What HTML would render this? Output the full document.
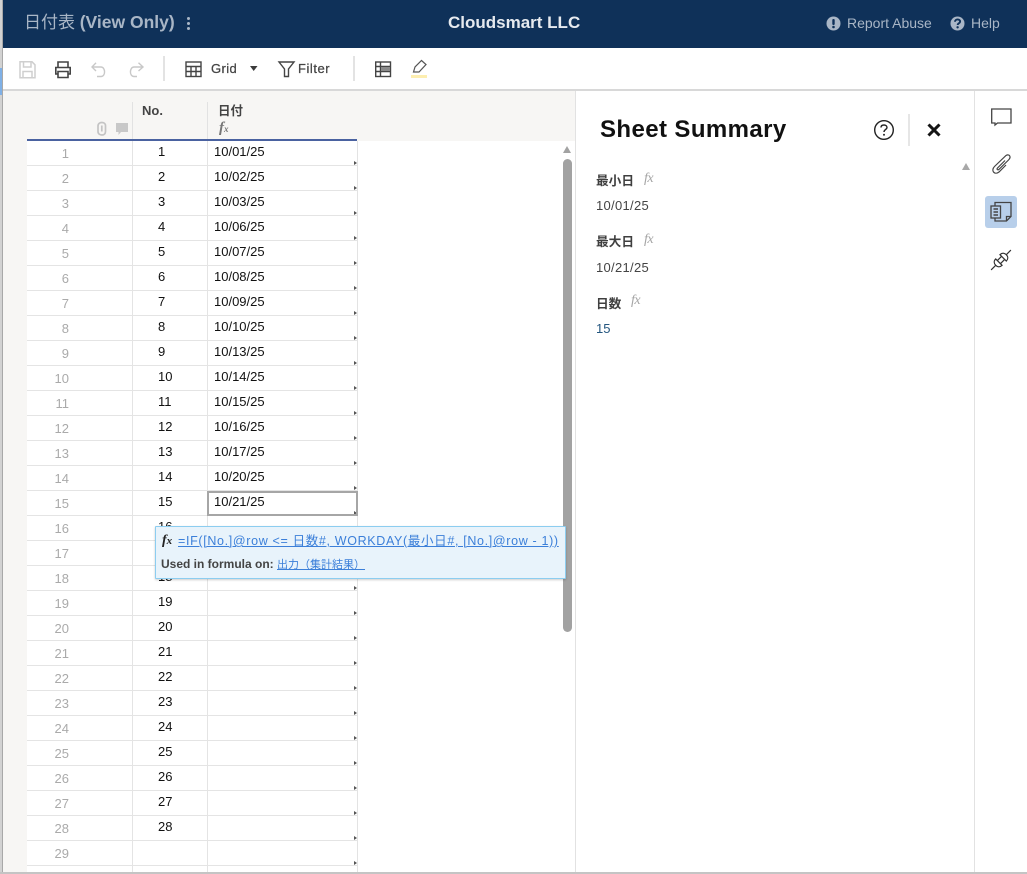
<!DOCTYPE html>
<html><head><meta charset="utf-8">
<style>
*{box-sizing:border-box}
html,body{margin:0;padding:0;width:1027px;height:874px;overflow:hidden;background:#fff;font-family:"Liberation Sans","Noto Sans CJK JP",sans-serif}
#w{position:relative;width:1027px;height:874px;overflow:hidden;background:#fff}
.a{position:absolute}
.t{position:absolute;white-space:nowrap;line-height:16px}
.r{position:absolute;left:27px;width:331px;height:25px;border-bottom:1px solid #e4e4e4;border-right:1px solid #e3e3e3}
.r i{position:absolute;font-style:normal;white-space:nowrap;line-height:16px;font-size:13px}
.r .n{right:288px;top:5px;color:#aaa;width:40px;text-align:right}
.r .v{left:131px;top:3px;color:#111}
.r .d{left:187px;top:3px;color:#111}
.r:before{content:"";position:absolute;left:105px;top:0;width:1px;height:25px;background:#e4e4e4}
.r:after{content:"";position:absolute;left:180px;top:0;width:1px;height:25px;background:#e4e4e4}
.r b{position:absolute;right:0;top:20px;width:0;height:0;border-left:3px solid #555;border-top:2px solid transparent;border-bottom:2px solid transparent}
.fx{font-size:14px;font-style:italic;font-family:'Liberation Serif',serif;color:#a5a5a5;letter-spacing:-.5px}
</style></head><body><div id="w">
<div class="a" style="left:0;top:0;width:3px;height:874px;background:#d2d2d2;border-right:1px solid #a8a8a8"></div>
<div class="a" style="left:0;top:68px;width:2px;height:27px;background:#7fb0e6"></div>
<div class="a" style="left:3px;top:0;width:1024px;height:48px;background:#0f3159"></div>
<div class="t" style="left:24px;top:12px;font-size:17px;line-height:20px;color:#a9b6c6">日付表 <span style="font-weight:bold;font-size:17.500px">(View Only)</span></div>
<div class="a" style="left:187px;top:17px;width:3px;height:3px;background:#a9b6c6;border-radius:50%;box-shadow:0 5px 0 #a9b6c6,0 10px 0 #a9b6c6"></div>
<div class="t" style="left:448px;top:13px;font-size:17px;line-height:20px;color:#e6eaef;font-weight:bold">Cloudsmart LLC</div>
<svg class="a" style="left:826px;top:16px" width="15" height="15" viewBox="0 0 15 15"><circle cx="7.5" cy="7.5" r="7" fill="#a9b6c6"/><rect x="6.3" y="3" width="2.4" height="6" rx="1" fill="#0f3159"/><circle cx="7.5" cy="11" r="1.3" fill="#0f3159"/></svg>
<div class="t" style="left:847px;top:15px;font-size:14px;color:#a9b6c6">Report Abuse</div>
<svg class="a" style="left:950px;top:16px" width="15" height="15" viewBox="0 0 15 15"><circle cx="7.5" cy="7.5" r="7" fill="#a9b6c6"/><path d="M5 5.8C5 4.3 6.2 3.4 7.6 3.4 9 3.4 10.100 4.300 10.100 5.600 10.100 7.400 7.600 7.300 7.600 9" fill="none" stroke="#0f3159" stroke-width="1.900"/><circle cx="7.600" cy="11.300" r="1.200" fill="#0f3159"/></svg>
<div class="t" style="left:971px;top:15px;font-size:14px;color:#a9b6c6">Help</div>

<div class="a" style="left:3px;top:89px;width:1024px;height:2px;background:#d8d8d8"></div>
<svg class="a" style="left:0;top:48px" width="440" height="41" viewBox="0 0 440 41" fill="none">
<g stroke="#cfcfcf" stroke-width="1.500"><path d="M20 13.800H32L35 16.800V29.800H20Z"/><path d="M23.500 14V19H31V14M23 29.800V23.500H32V29.800"/></g>
<g stroke="#444" stroke-width="1.600"><path d="M58 19V14H68V19"/><path d="M58 26H55.800V19.500H70.200V26H68"/><path d="M58 23.500H68V29.500H58Z"/></g>
<g stroke="#c8c8c8" stroke-width="1.400"><path d="M92 19H101C105.500 19 106 28.500 101 28.500H97"/><path d="M96 14.800L92 19 96 23"/><path d="M143 19H134C129.500 19 129 28.500 134 28.500H137"/><path d="M138.500 14.800L143 19 138.500 23"/></g>
<rect x="163" y="8" width="2" height="25" fill="#e3e3e3"/>
<rect x="353" y="8" width="2" height="25" fill="#e3e3e3"/>
<g stroke="#444" stroke-width="1.400"><rect x="186" y="14" width="15" height="14.500"/><path d="M186 18.500H201M186 23.500H201M191 18.500V28.500M196 18.500V28.500"/></g>
<path d="M250 18H257.500L253.700 23Z" fill="#3c3c3c"/>
<path d="M279 14H294L288.500 21V28.500L284.500 28.500V21Z" stroke="#444" stroke-width="1.400"/>
<g stroke="#444" stroke-width="1.400"><rect x="375.700" y="14" width="14.800" height="14.500"/><path d="M375.700 18.500H390.500M375.700 23.500H390.500M380.500 14V28.500"/></g>
<rect x="381" y="19" width="9" height="4" fill="#8a8a8a"/>
<path d="M413.500 24L415 19 421.500 12.500 426 16.500 419 24Z" stroke="#555" stroke-width="1.200"/>
<rect x="411" y="27" width="16" height="3" fill="#fdeeb0"/>
</svg>
<div class="t" style="left:211px;top:61px;font-size:13px;color:#444;letter-spacing:.4px;-webkit-text-stroke:.25px #444">Grid</div>
<div class="t" style="left:298px;top:61px;font-size:13px;color:#444;letter-spacing:.55px;-webkit-text-stroke:.25px #444">Filter</div>

<div class="a" style="left:3px;top:91px;width:572px;height:50px;background:#f7f6f4"></div>
<div class="a" style="left:3px;top:91px;width:24px;height:781px;background:#f7f6f4"></div>
<div class="a" style="left:132px;top:102px;width:1px;height:37px;background:#e2e2e2"></div>
<div class="a" style="left:207px;top:102px;width:1px;height:37px;background:#e2e2e2"></div>
<div class="t" style="left:142px;top:103px;font-size:13px;font-weight:bold;color:#444">No.</div>
<div class="t" style="left:218px;top:103px;font-size:12.500px;font-weight:bold;color:#444">日付</div>
<div class="t" style="left:219px;top:120px;font-size:15px;font-weight:bold;font-style:italic;font-family:'Liberation Serif',serif;color:#777">f<span style="font-size:9px">x</span></div>
<svg class="a" style="left:95px;top:121px" width="34" height="16" viewBox="0 0 34 16" fill="none"><path d="M10.500 4.500V10.500C10.500 12.800 9 14 7 14 4.800 14 3 12.800 3 10.500V5C3 2.700 4.800 1.500 6.800 1.500 8.800 1.500 10.500 2.700 10.500 4.500" stroke="#c4c4c4" stroke-width="1.700"/><path d="M6.800 4.500V10.500" stroke="#c4c4c4" stroke-width="1.700"/><path d="M21 2H33V11H26L23.500 14V11H21Z" fill="#c8c8c8"/></svg>

<div class="a" style="left:27px;top:139px;width:330px;height:2px;background:#4a62a0"></div>

<div class="r" style="top:141px"><i class="n">1</i><i class="v">1</i><i class="d">10/01/25</i><b></b></div>
<div class="r" style="top:166px"><i class="n">2</i><i class="v">2</i><i class="d">10/02/25</i><b></b></div>
<div class="r" style="top:191px"><i class="n">3</i><i class="v">3</i><i class="d">10/03/25</i><b></b></div>
<div class="r" style="top:216px"><i class="n">4</i><i class="v">4</i><i class="d">10/06/25</i><b></b></div>
<div class="r" style="top:241px"><i class="n">5</i><i class="v">5</i><i class="d">10/07/25</i><b></b></div>
<div class="r" style="top:266px"><i class="n">6</i><i class="v">6</i><i class="d">10/08/25</i><b></b></div>
<div class="r" style="top:291px"><i class="n">7</i><i class="v">7</i><i class="d">10/09/25</i><b></b></div>
<div class="r" style="top:316px"><i class="n">8</i><i class="v">8</i><i class="d">10/10/25</i><b></b></div>
<div class="r" style="top:341px"><i class="n">9</i><i class="v">9</i><i class="d">10/13/25</i><b></b></div>
<div class="r" style="top:366px"><i class="n">10</i><i class="v">10</i><i class="d">10/14/25</i><b></b></div>
<div class="r" style="top:391px"><i class="n">11</i><i class="v">11</i><i class="d">10/15/25</i><b></b></div>
<div class="r" style="top:416px"><i class="n">12</i><i class="v">12</i><i class="d">10/16/25</i><b></b></div>
<div class="r" style="top:441px"><i class="n">13</i><i class="v">13</i><i class="d">10/17/25</i><b></b></div>
<div class="r" style="top:466px"><i class="n">14</i><i class="v">14</i><i class="d">10/20/25</i><b></b></div>
<div class="r" style="top:491px"><i class="n">15</i><i class="v">15</i><i class="d">10/21/25</i><b></b></div>
<div class="r" style="top:516px"><i class="n">16</i><i class="v">16</i><b></b></div>
<div class="r" style="top:541px"><i class="n">17</i><i class="v">17</i><b></b></div>
<div class="r" style="top:566px"><i class="n">18</i><i class="v">18</i><b></b></div>
<div class="r" style="top:591px"><i class="n">19</i><i class="v">19</i><b></b></div>
<div class="r" style="top:616px"><i class="n">20</i><i class="v">20</i><b></b></div>
<div class="r" style="top:641px"><i class="n">21</i><i class="v">21</i><b></b></div>
<div class="r" style="top:666px"><i class="n">22</i><i class="v">22</i><b></b></div>
<div class="r" style="top:691px"><i class="n">23</i><i class="v">23</i><b></b></div>
<div class="r" style="top:716px"><i class="n">24</i><i class="v">24</i><b></b></div>
<div class="r" style="top:741px"><i class="n">25</i><i class="v">25</i><b></b></div>
<div class="r" style="top:766px"><i class="n">26</i><i class="v">26</i><b></b></div>
<div class="r" style="top:791px"><i class="n">27</i><i class="v">27</i><b></b></div>
<div class="r" style="top:816px"><i class="n">28</i><i class="v">28</i><b></b></div>
<div class="r" style="top:841px"><i class="n">29</i><b></b></div>
<div class="r" style="top:866px;height:6px;border-bottom:0;overflow:hidden"></div>

<div class="a" style="left:207px;top:491px;width:151px;height:25px;border:2px solid #a6a6a6"></div>

<div class="a" style="left:563px;top:159px;width:9px;height:473px;background:#a2a2a2;border-radius:5px"></div>
<div class="a" style="left:563px;top:146px;width:0;height:0;border-left:4.500px solid transparent;border-right:4.500px solid transparent;border-bottom:7px solid #a2a2a2"></div>

<div class="a" style="left:155px;top:526px;width:411px;height:53px;background:#e8f3fb;border:1px solid #8ccdf0;box-shadow:0 1px 2px rgba(0,0,0,.2);border-radius:1px"></div>
<div class="t" style="left:162px;top:533px;font-size:14px;font-weight:bold;font-style:italic;font-family:'Liberation Serif',serif;color:#222">f<span style="font-size:11px">x</span></div>
<div class="t" style="left:178px;top:533px;font-size:12.500px;color:#3b7fd9;text-decoration:underline;letter-spacing:.66px">=IF([No.]@row &lt;= 日数#, WORKDAY(最小日#, [No.]@row - 1))</div>
<div class="t" style="left:161px;top:556px;font-size:12px;color:#444"><span style="font-weight:bold">Used in formula on:</span> <span style="color:#3b7fd9;text-decoration:underline;font-size:11px">出力（集計結果）</span></div>

<div class="a" style="left:575px;top:91px;width:1px;height:781px;background:#e2e2e2"></div>

<div class="t" style="left:600px;top:115px;font-size:24px;line-height:30px;font-weight:bold;color:#111;letter-spacing:.4px">Sheet Summary</div>
<svg class="a" style="left:873px;top:119px" width="22" height="22" viewBox="0 0 22 22" fill="none"><circle cx="11" cy="11" r="9.300" stroke="#222" stroke-width="1.400"/><path d="M8 8.500C8 6.700 9.400 6 11 6 12.600 6 14 6.900 14 8.500 14 10.500 11 10.500 11 13" stroke="#222" stroke-width="1.400"/><circle cx="11" cy="15.800" r="1" fill="#222"/></svg>
<div class="a" style="left:908px;top:114px;width:2px;height:32px;background:#e6e6e6"></div>
<svg class="a" style="left:927px;top:123px" width="14" height="14" viewBox="0 0 14 14"><path d="M1.500 1.500L12.500 12.500M12.500 1.500L1.500 12.500" stroke="#151515" stroke-width="3"/></svg>
<div class="a" style="left:962px;top:163px;width:0;height:0;border-left:4.500px solid transparent;border-right:4.500px solid transparent;border-bottom:7px solid #a8a8a8"></div>

<div class="t" style="left:596px;top:173px;font-size:12.700px;font-weight:bold;color:#3f3f3f">最小日</div>
<div class="t fx" style="left:644px;top:171px">fx</div>
<div class="t" style="left:596px;top:198px;font-size:13px;letter-spacing:.3px;color:#444">10/01/25</div>
<div class="t" style="left:596px;top:234px;font-size:12.700px;font-weight:bold;color:#3f3f3f">最大日</div>
<div class="t fx" style="left:644px;top:232px">fx</div>
<div class="t" style="left:596px;top:260px;font-size:13px;letter-spacing:.3px;color:#444">10/21/25</div>
<div class="t" style="left:596px;top:296px;font-size:12.700px;font-weight:bold;color:#3f3f3f">日数</div>
<div class="t fx" style="left:631px;top:293px">fx</div>
<div class="t" style="left:596px;top:321px;font-size:13px;color:#24567f">15</div>

<div class="a" style="left:974px;top:91px;width:1px;height:781px;background:#e2e2e2"></div>
<div class="a" style="left:985px;top:196px;width:32px;height:32px;background:#b8cfea;border-radius:3px"></div>
<svg class="a" style="left:985px;top:100px" width="32" height="175" viewBox="0 0 32 175" fill="none">
<path d="M6.700 9H26V23H12.500L10 25V23H6.700Z" stroke="#444" stroke-width="1.300"/>
<path d="M20 60.500L12.500 68C11.500 69 12.500 70.500 13.800 69.500L23.500 60C26.500 57 24.500 53.500 21 55.500L9.500 66.500C5.500 70.500 9.500 75.500 14 72L21 65" stroke="#444" stroke-width="1.200"/>
<g stroke="#444" stroke-width="1.300"><path d="M10 102.500H26V116.500L21.500 121H10Z"/><path d="M21.500 121V116.500H26"/><rect x="6" y="106" width="9.500" height="12" fill="#b8cfea"/></g>
<path d="M8.500 109H13M8.500 112H13M8.500 115H13" stroke="#444" stroke-width="1.400"/>
<g transform="rotate(-45 16 160)" stroke="#333" stroke-width="1.200"><path d="M2 160H8.500M23.500 160H30"/><path d="M13 155.500V164.500C10 164.500 8.500 162.500 8.500 160 8.500 157.500 10 155.500 13 155.500Z"/><path d="M19 155.500V164.500C22 164.500 23.500 162.500 23.500 160 23.500 157.500 22 155.500 19 155.500Z"/><path d="M13 157.800H19M13 162.200H19"/></g>
</svg>
<div class="a" style="left:0;top:872px;width:1027px;height:2px;background:#c4c4c4"></div>
</div></body></html>
